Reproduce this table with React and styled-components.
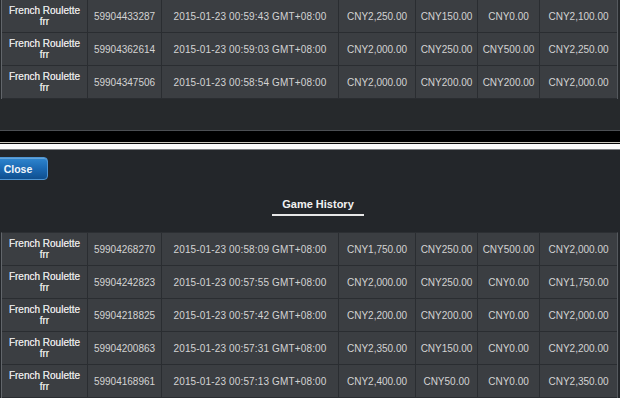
import React from "react";
import styled, { createGlobalStyle } from "styled-components";

const Global = createGlobalStyle`
  html, body { margin: 0; padding: 0; background: #24272a; }
  body { font-family: "Liberation Sans", Arial, sans-serif; }
`;

const Page = styled.div`
  width: 620px;
  height: 398px;
  overflow: hidden;
  background: #23262a;
  display: flex;
  flex-direction: column;
`;

const TopPanel = styled.section`
  height: 130px;
  background: #26292c;
  flex: none;
`;

const Divider = styled.div`
  height: 20px;
  flex: none;
  background: linear-gradient(
    to bottom,
    #4c4f53 0 1px,
    #000 1px 12px,
    #c9c6bd 12px 13px,
    #050505 13px 14px,
    #fbfbfb 14px 19px,
    #7d7f82 19px 20px
  );
`;

const BottomPanel = styled.section`
  flex: 1;
  display: flex;
  flex-direction: column;
  background: #23262a;
`;

const Toolbar = styled.div`
  display: flex;
  padding-top: 7px;
`;

const CloseButton = styled.button`
  margin-left: -12px;
  width: 60px;
  height: 23px;
  border: 1px solid #4f95d3;
  border-radius: 4px;
  background: linear-gradient(to bottom, #2f86cf 0%, #1b69b3 50%, #0f4f8f 100%);
  box-shadow: inset 0 1px 0 rgba(255, 255, 255, 0.25);
  color: #f2f6fa;
  font-family: "Liberation Sans", Arial, sans-serif;
  font-weight: 700;
  font-size: 10.5px;
  padding: 0 0 0 0;
  cursor: pointer;
`;

const TitleRow = styled.div`
  display: flex;
  justify-content: center;
  margin-top: 17px;
  padding-left: 16px;
`;

const Title = styled.h2`
  margin: 0;
  padding: 0 10px 3px;
  font-size: 11px;
  line-height: 14px;
  font-weight: 700;
  color: #f2f2f2;
  border-bottom: 2px solid #e6e6e6;
`;

const Table = styled.div`
  display: grid;
  grid-template-columns: 86px 74px 177px 77px 62px 62px 77px;
  margin-left: 1px;
  width: 615px;
  border-left: 1px solid #62666b;
  border-right: 1px solid #55595e;
  border-top: ${(p) => (p.$top ? "1px solid #2c2f33" : "none")};
  margin-top: ${(p) => (p.$top ? "16px" : "0")};
`;

const Cell = styled.div`
  box-sizing: border-box;
  height: 33px;
  display: flex;
  flex-direction: column;
  align-items: center;
  justify-content: center;
  text-align: center;
  background: #3b3e42;
  border-bottom: 1px solid #2a2d31;
  border-right: ${(p) => (p.$last ? "none" : "1px solid #2a2d31")};
  color: ${(p) => (p.$game ? "#e2e2e2" : "#d3d3d3")};
  font-size: 10px;
  line-height: 11px;
  letter-spacing: ${(p) => (p.$wide ? "0.15px" : "0")};
  text-shadow: ${(p) => (p.$game ? "0 0 0.5px #e2e2e2" : "none")};
  white-space: nowrap;
`;

const topRows = [
  ["59904433287", "2015-01-23 00:59:43 GMT+08:00", "CNY2,250.00", "CNY150.00", "CNY0.00", "CNY2,100.00"],
  ["59904362614", "2015-01-23 00:59:03 GMT+08:00", "CNY2,000.00", "CNY250.00", "CNY500.00", "CNY2,250.00"],
  ["59904347506", "2015-01-23 00:58:54 GMT+08:00", "CNY2,000.00", "CNY200.00", "CNY200.00", "CNY2,000.00"],
];

const bottomRows = [
  ["59904268270", "2015-01-23 00:58:09 GMT+08:00", "CNY1,750.00", "CNY250.00", "CNY500.00", "CNY2,000.00"],
  ["59904242823", "2015-01-23 00:57:55 GMT+08:00", "CNY2,000.00", "CNY250.00", "CNY0.00", "CNY1,750.00"],
  ["59904218825", "2015-01-23 00:57:42 GMT+08:00", "CNY2,200.00", "CNY200.00", "CNY0.00", "CNY2,000.00"],
  ["59904200863", "2015-01-23 00:57:31 GMT+08:00", "CNY2,350.00", "CNY150.00", "CNY0.00", "CNY2,200.00"],
  ["59904168961", "2015-01-23 00:57:13 GMT+08:00", "CNY2,400.00", "CNY50.00", "CNY0.00", "CNY2,350.00"],
];

function Rows({ rows }) {
  return rows.map((r, i) => (
    <React.Fragment key={i}>
      <Cell $game>
        <span>French Roulette</span>
        <span>frr</span>
      </Cell>
      {r.map((v, j) => (
        <Cell key={j} $wide={j === 1} $last={j === r.length - 1}>
          {v}
        </Cell>
      ))}
    </React.Fragment>
  ));
}

export default function App() {
  return (
    <>
      <Global />
      <Page>
        <TopPanel>
          <Table>
            <Rows rows={topRows} />
          </Table>
        </TopPanel>
        <Divider />
        <BottomPanel>
          <Toolbar>
            <CloseButton>Close</CloseButton>
          </Toolbar>
          <TitleRow>
            <Title>Game History</Title>
          </TitleRow>
          <Table $top>
            <Rows rows={bottomRows} />
          </Table>
        </BottomPanel>
      </Page>
    </>
  );
}
